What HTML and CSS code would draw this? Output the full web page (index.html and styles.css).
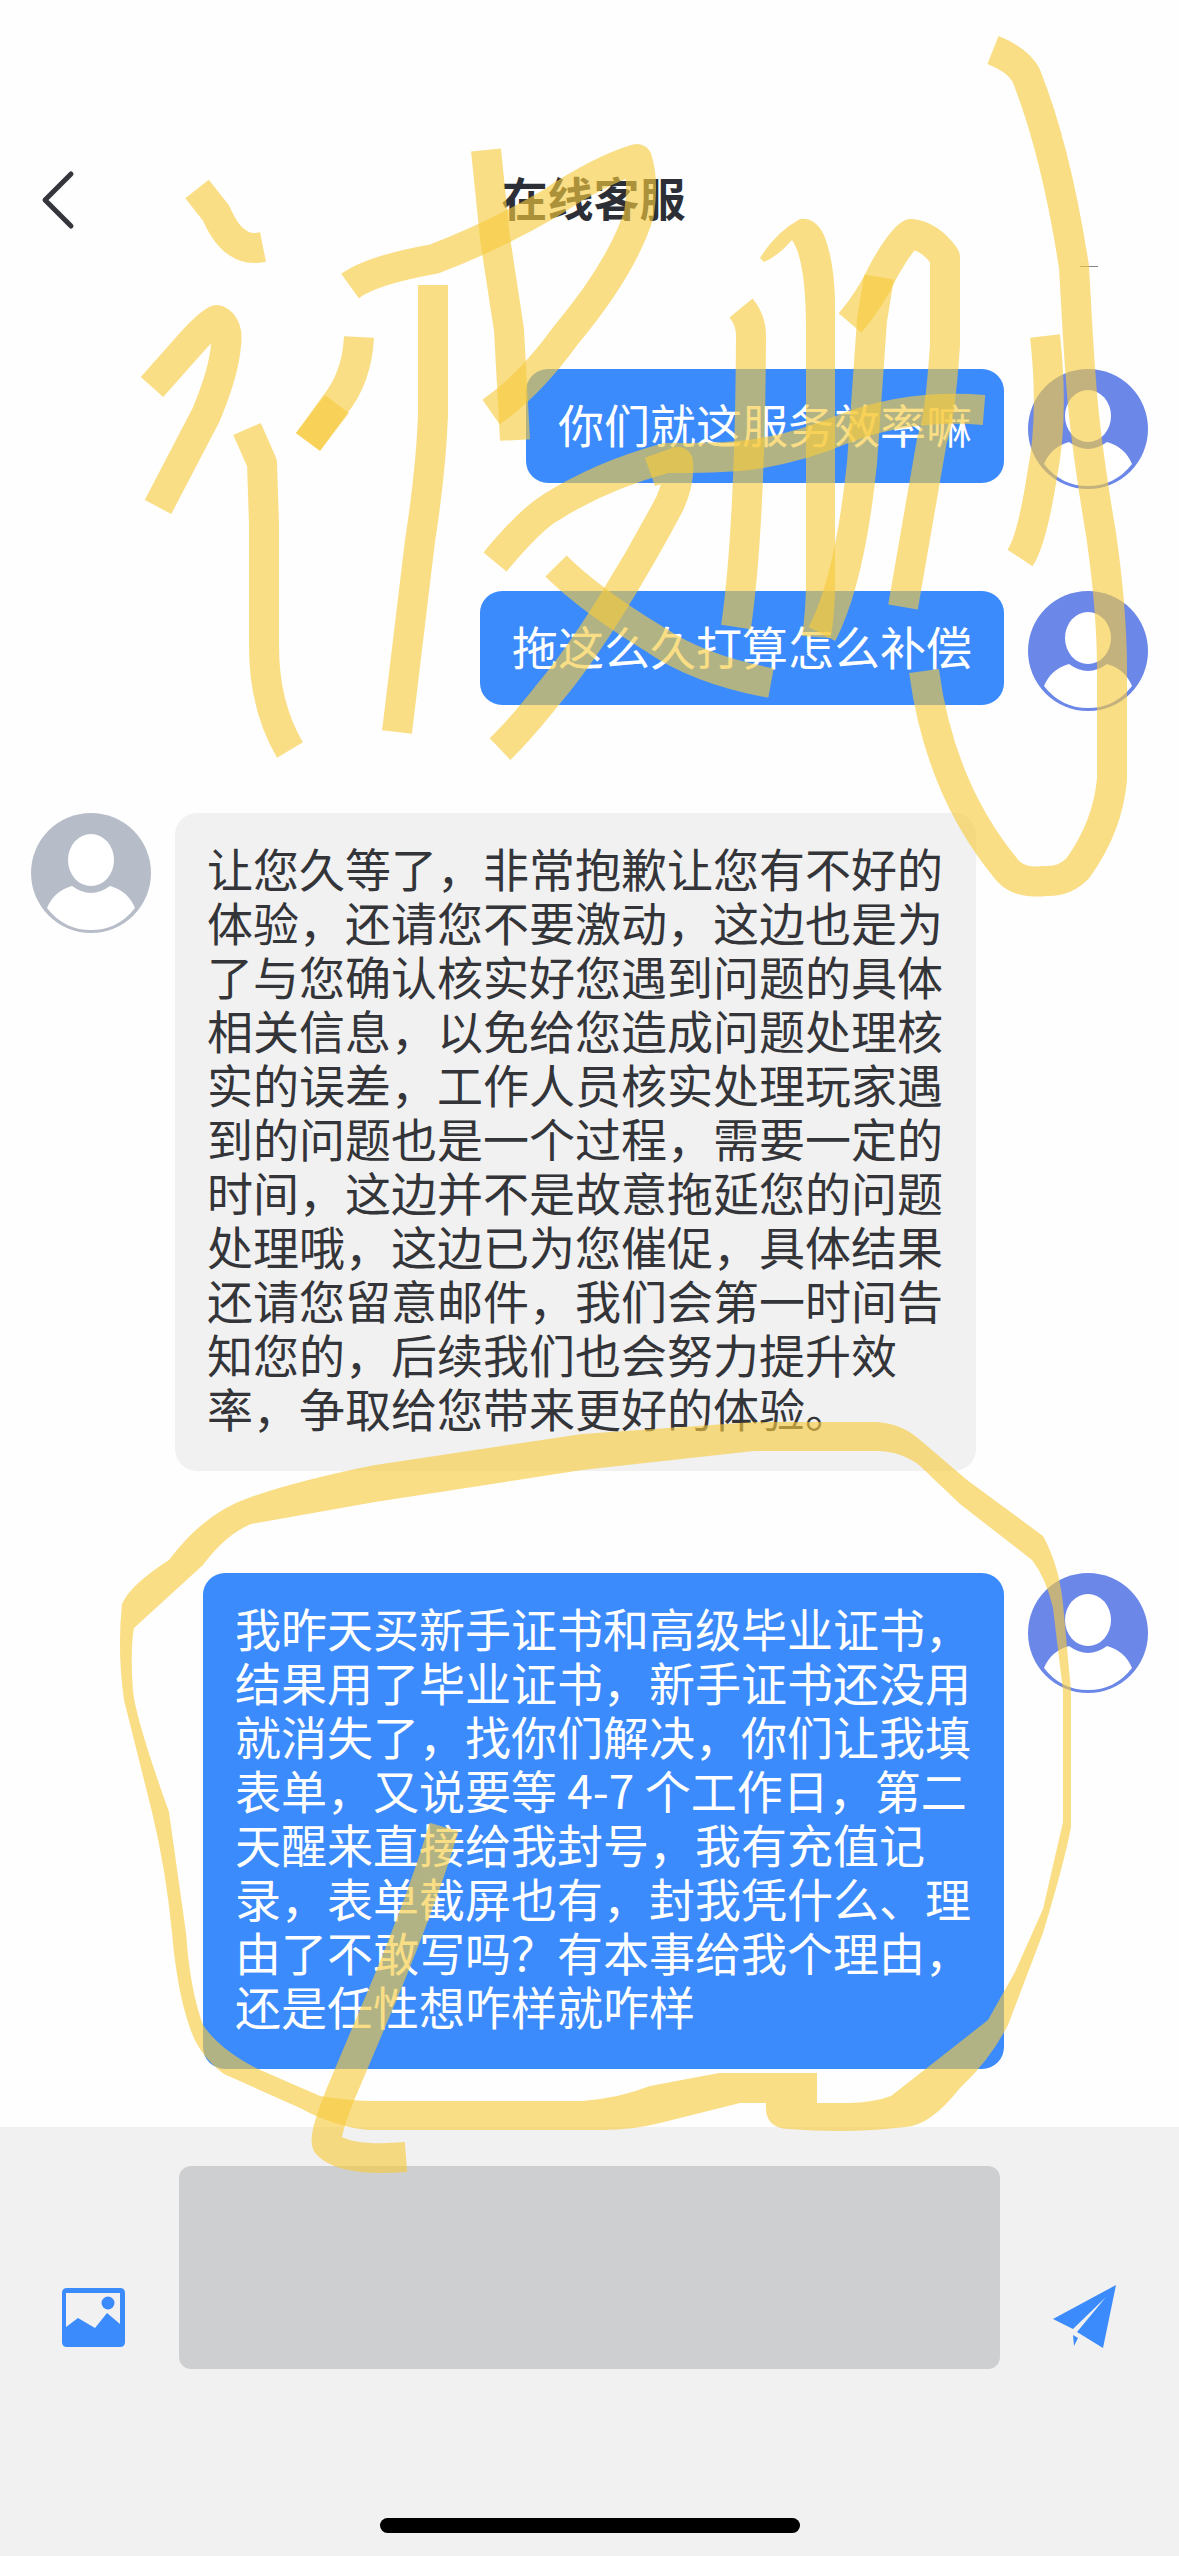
FILE: index.html
```html
<!DOCTYPE html>
<html lang="zh-CN">
<head>
    <meta charset="UTF-8">
    <meta name="viewport" content="width=device-width, initial-scale=1.0">
    <title>在线客服</title>
    <link rel="stylesheet" href="styles.css">
</head>
<body>
    <!-- shared avatar shape, coloured through currentColor -->
    <svg class="sprite" aria-hidden="true">
        <symbol id="avatar" viewBox="0 0 120 120">
            <circle cx="60" cy="60" r="60" fill="currentColor"/>
            <ellipse cx="60" cy="47" rx="23" ry="26" fill="#fff"/>
            <path d="M41 73 Q60 87 79 73 Q97 78 104 95 Q87 117 60 117 Q33 117 16 95 Q23 78 41 73 Z" fill="#fff"/>
        </symbol>
    </svg>

    <div class="page">
        <header class="header">
            <button type="button" class="back" aria-label="返回">
                <svg viewBox="0 0 36 60">
                    <path d="M31 4 L5 30 L31 56"/>
                </svg>
            </button>
            <h1>在线客服</h1>
        </header>

        <main class="messages">
            <div class="dash"></div>

            <div class="message mine">
                <p class="bubble">你们就这服务效率嘛</p>
                <svg class="avatar"><use href="#avatar"/></svg>
            </div>

            <div class="message mine">
                <p class="bubble">拖这么久打算怎么补偿</p>
                <svg class="avatar"><use href="#avatar"/></svg>
            </div>

            <div class="message">
                <svg class="avatar"><use href="#avatar"/></svg>
                <p class="bubble long">让您久等了，非常抱歉让您有不好的体验，还请您不要激动，这边也是为了与您确认核实好您遇到问题的具体相关信息，以免给您造成问题处理核实的误差，工作人员核实处理玩家遇到的问题也是一个过程，需要一定的时间，这边并不是故意拖延您的问题处理哦，这边已为您催促，具体结果还请您留意邮件，我们会第一时间告知您的，后续我们也会努力提升效率，争取给您带来更好的体验。</p>
            </div>

            <div class="message mine">
                <p class="bubble long">我昨天买新手证书和高级毕业证书，结果用了毕业证书，新手证书还没用就消失了，找你们解决，你们让我填表单，又说要等 4-7 个工作日，第二天醒来直接给我封号，我有充值记录，表单截屏也有，封我凭什么、理由了不敢写吗？有本事给我个理由，还是任性想咋样就咋样</p>
                <svg class="avatar"><use href="#avatar"/></svg>
            </div>
        </main>

        <footer class="footer">
            <form class="composer">
                <button type="button" class="icon-button" aria-label="发送图片">
                    <svg viewBox="0 0 64 64">
                        <path fill-rule="evenodd" d="M5 3 H58 Q63 3 63 8 V57 Q63 62 58 62 H5 Q0 62 0 57 V8 Q0 3 5 3 Z M4 8 V42 L16 33 L33 43 L45 28 L58 39 V8 Z"/>
                        <circle cx="46" cy="18" r="6.5"/>
                    </svg>
                </button>
                <textarea aria-label="输入消息"></textarea>
                <button type="submit" class="icon-button" aria-label="发送">
                    <svg viewBox="0 0 64 64">
                        <path d="M63 0 L0 34 L20 44 L53 12 L24 47 L50 63 Z M20 50 L25 53 L21 61 Z"/>
                    </svg>
                </button>
            </form>
            <div class="home-indicator"></div>
        </footer>

        <!-- highlighter strokes over the chat -->
        <svg class="marker" viewBox="0 0 1179 2556" preserveAspectRatio="xMidYMin meet" aria-hidden="true">
            <path d="M197 189 L216 213 Q226 236 238 243 Q248 250 263 247"/>
            <path d="M152 387 L191 343 Q208 324 217 320 Q229 326 226 345 Q224 372 206 415 L158 507"/>
            <path d="M247 429 L262 463 L264 524 V646 Q264 706 290 750"/>
            <path d="M359 337 Q357 378 334 406 L308 442"/>
            <path d="M337 404 L308 442"/>
            <path d="M433 285 V415 Q431 470 420 541 L397 732"/>
            <path d="M350 286 Q372 270 434 259 Q490 238 549 204 Q600 170 637 159 Q644 180 639 214 Q622 268 566 335 Q530 385 491 412"/>
            <path d="M486 150 L495 238 L509 330 L515 440"/>
            <path d="M495 562 Q530 520 550 508 Q600 476 666 458 C720 458 770 460 846 428 Q910 404 984 410"/>
            <path d="M650 472 L678 462 Q680 480 670 503 C640 560 590 645 550 692 Q520 730 500 749"/>
            <path d="M556 566 Q590 600 656 640 Q700 670 771 683"/>
            <path d="M741 308 Q751 320 751 336 Q750 530 736 627"/>
            <path class="solid" d="M760 258 Q776 232 800 219 Q815 217 824 235 Q834 260 835 300 V590 Q834 625 830 638 L802 636 Q806 610 806 580 V330 Q806 260 792 240 Q778 256 764 262 Z"/>
            <path d="M879 277 L872 320 L862 463 Q850 580 822 634"/>
            <path d="M850 323 Q870 300 884 270 Q902 238 911 234 Q930 236 945 257 V345 Q940 420 932 440 L903 607"/>
            <path d="M1045 336 Q1054 416 1042 476 Q1032 540 1020 558"/>
            <path d="M993 50 Q1018 60 1026 75 Q1056 150 1074 267 C1080 370 1080 410 1101 534 Q1112 610 1112 670 V779 Q1108 826 1078 868 Q1065 882 1045 881 Q1020 884 1008 871 Q940 790 924 671"/>
            <path class="solid" d="M817 2103 L740 2103 L664 2122 Q630 2131 595 2130 L368 2130 Q335 2127 300 2108 L224 2074 Q198 2055 189 2025 Q177 1990 172 1933 Q166 1870 152 1812 L124 1700 Q117 1650 122 1604 Q130 1585 169 1560 Q205 1512 251 1497 Q300 1480 375 1465 L582 1434 L754 1422 L877 1422 Q902 1424 919 1439 L967 1480 L1043 1536 Q1059 1565 1063 1604 L1071 1691 L1071 1827 Q1065 1860 1043 1933 L1008 2025 Q990 2060 960 2088 Q930 2126 905 2127 Q850 2134 788 2129 Q764 2128 766 2103 L850 2103 Q875 2102 891 2096 L932 2064 L988 2020 L1015 1972 L1043 1909 L1063 1822 L1063 1691 L1053 1608 Q1046 1578 1032 1560 L960 1504 L919 1465 Q900 1451 877 1451 L754 1451 L582 1470 L375 1502 L251 1524 Q225 1535 203 1565 L134 1628 Q130 1650 133 1691 Q136 1720 169 1812 L186 1933 Q190 1990 203 2025 Q220 2050 258 2069 L320 2096 Q350 2101 375 2101 L582 2101 Q620 2098 650 2086 L719 2073 L817 2073 Z"/>
            <path d="M444 1827 Q424 1895 382 1996 L341 2093 Q322 2140 328 2145 Q345 2162 406 2157"/>
        </svg>
    </div>
</body>
</html>
```

FILE: styles.css
```css
:root {
    --blue: #3b8bfd;
    --grey: #f1f1f2;
    --text: #343539;
    --highlight: #f7ca3e;
}

* {
    box-sizing: border-box;
}

body {
    margin: 0;
    background-color: #fefefe;
    color: var(--text);
    font-family: "Noto Sans CJK SC", sans-serif;
    font-size: 46px;
    line-height: 54px;
}

button {
    padding: 0;
    border: none;
    background: none;
    cursor: pointer;
}

.sprite {
    position: absolute;
    width: 0;
    height: 0;
}

.page {
    position: relative;
    display: flex;
    flex-direction: column;
    min-height: 100vh;
}

/* Header */
.header {
    display: grid;
    grid-template-columns: 1fr auto 1fr;
    align-items: center;
    padding: 160px 32px 0 40px;
    height: 240px;
}

.header h1 {
    margin: 0;
    padding-bottom: 8px;
    font-size: 46px;
    font-weight: 700;
    color: #2d2f36;
}

.back {
    justify-self: start;
    height: 60px;
}

.back svg {
    display: block;
    width: 36px;
    height: 60px;
    fill: none;
    stroke: #34363c;
    stroke-width: 5;
    stroke-linecap: round;
    stroke-linejoin: round;
}

/* Messages */
.messages {
    flex: 1;
    display: flex;
    flex-direction: column;
    gap: 102px;
    padding: 26px 31px 58px;
}

.dash {
    align-self: flex-end;
    width: 18px;
    height: 1px;
    margin-right: 50px;
    background-color: #85868a;
}

.message {
    display: flex;
    align-items: flex-start;
    gap: 24px;
}

.message.mine {
    justify-content: flex-end;
}

.avatar {
    flex: none;
    width: 120px;
    height: 120px;
    color: #b7bdc8;
}

.mine .avatar {
    color: #6b87e8;
}

.bubble {
    max-width: 801px;
    margin: 0;
    padding: 27px 32px 33px;
    border-radius: 22px;
    background-color: var(--grey);
}

.bubble.long {
    padding-bottom: 37px;
}

.mine .bubble {
    background-color: var(--blue);
    color: #fff;
}

/* Footer */
.footer {
    display: flex;
    flex-direction: column;
    justify-content: space-between;
    align-items: center;
    height: 430px;
    padding: 39px 62px 24px;
    background-color: #f1f1f1;
}

.composer {
    display: flex;
    align-items: flex-end;
    gap: 53px;
    width: 100%;
}

.composer textarea {
    flex: 1;
    min-width: 0;
    height: 203px;
    padding: 20px;
    border: none;
    border-radius: 12px;
    background-color: #cecfd1;
    font: inherit;
    resize: none;
}

.icon-button {
    flex: none;
    width: 64px;
    height: 64px;
    margin-bottom: 20px;
}

.icon-button svg {
    display: block;
    fill: var(--blue);
}

.home-indicator {
    width: 420px;
    height: 15px;
    border-radius: 8px;
    background-color: #000;
}

/* Highlighter */
.marker {
    position: absolute;
    top: 0;
    left: 0;
    width: 100%;
    pointer-events: none;
}

.marker path {
    fill: none;
    stroke: var(--highlight);
    stroke-width: 30;
    stroke-linejoin: round;
    opacity: 0.63;
}

.marker .solid {
    fill: var(--highlight);
    stroke: none;
}
```
